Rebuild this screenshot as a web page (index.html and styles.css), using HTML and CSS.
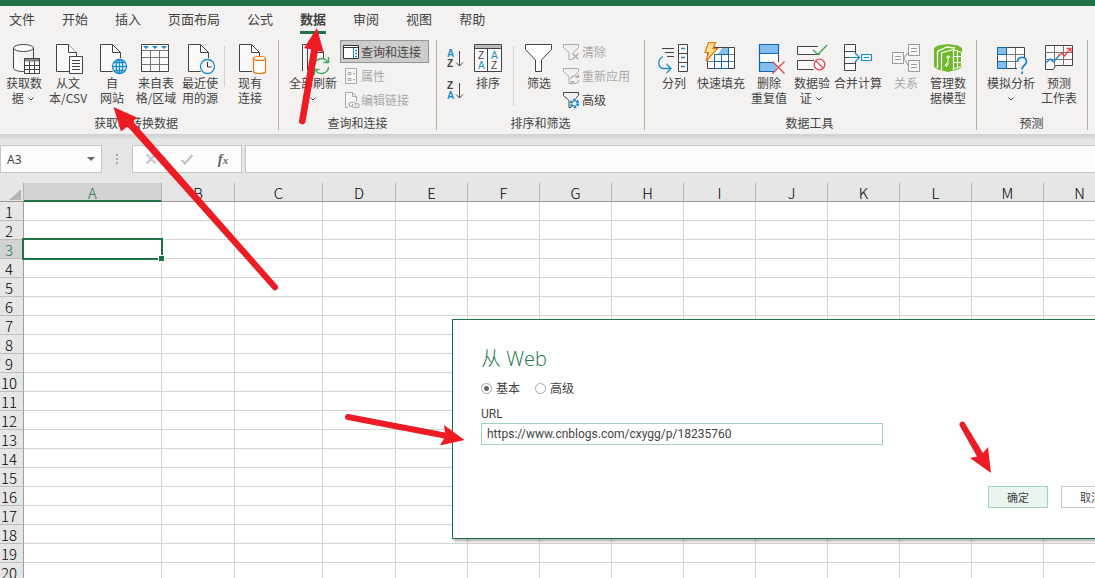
FILE: index.html
```html
<!DOCTYPE html>
<html lang="zh-CN">
<head>
<meta charset="utf-8">
<title>Excel - 数据</title>
<link rel="stylesheet" href="styles.css">
</head>
<body>
<div class="app">
  <div class="titlebar"></div>
  <nav class="tabs">
    <button class="tab">文件</button>
    <button class="tab">开始</button>
    <button class="tab">插入</button>
    <button class="tab">页面布局</button>
    <button class="tab">公式</button>
    <button class="tab active">数据</button>
    <button class="tab">审阅</button>
    <button class="tab">视图</button>
    <button class="tab">帮助</button>
  </nav>

  <div class="ribbon">
    <section class="group first">
      <div class="tools">
        <button class="tool">
          <svg class="icon" viewBox="2 41 44 34"><g fill="#fafafa" stroke="#444"><path d="M13.5 48v20c0 2 4 3.500 10 3.500h1M33.500 48v10"/><ellipse cx="23.500" cy="48" rx="10" ry="3.500"/><path d="M24.500 58.500h15v15h-15z"/><path d="M24.500 60h15" stroke-width="3" stroke="#888"/><path d="M24.500 58.500h15v15h-15zM24.500 65.500h15M24.500 69.500h15M29.500 61v12M34.500 61v12" fill="none"/></g></svg>
          <span>获取数<br>据 <svg class="chev" viewBox="0 0 6 4"><path d="M.5.5L3 3 5.500.5"/></svg></span>
        </button>
        <button class="tool">
          <svg class="icon" viewBox="46 41 44 34"><g fill="#fafafa" stroke="#444"><path d="M56.500 44.500h12l8 8v19h-20z"/><path d="M68.500 44.500v8h8"/><path d="M69.500 56.500h13v17h-13z"/><path d="M72 60.500h8M72 63.500h8M72 66.500h8M72 69.500h8"/></g></svg>
          <span>从文<br>本/CSV</span>
        </button>
        <button class="tool">
          <svg class="icon" viewBox="90 41 44 34"><path d="M100.500 44.500h12l8 8v19h-20z" fill="#fafafa" stroke="#444"/><path d="M112.500 44.500v8h8" fill="none" stroke="#444"/><circle cx="119.500" cy="66.500" r="8.500" fill="#f3f2f1"/><g fill="#fafafa" stroke="#1e8bcd" stroke-width="1.300"><circle cx="119.500" cy="66.500" r="7"/><ellipse cx="119.500" cy="66.500" rx="3.300" ry="7"/><path d="M112.500 66.500h14M114 62.500h11M114 70.500h11M119.500 59.500v14" fill="none"/></g></svg>
          <span>自<br>网站</span>
        </button>
        <button class="tool">
          <svg class="icon" viewBox="134 41 44 34"><path d="M141.500 44.500h27v27h-27z" fill="#fafafa" stroke="#444"/><path d="M142 50.500h26M142 57.500h26M142 64.500h26M150.500 50v21M159.500 50v21" stroke="#777" fill="none"/><path d="M143 46h6l-3 3zM152 46h6l-3 3zM161 46h6l-3 3z" fill="#1e8bcd"/></svg>
          <span>来自表<br>格/区域</span>
        </button>
        <button class="tool">
          <svg class="icon" viewBox="178 41 44 34"><path d="M188.500 44.500h12l8 8v19h-20z" fill="#fafafa" stroke="#444"/><path d="M200.500 44.500v8h8" fill="none" stroke="#444"/><circle cx="207.500" cy="66.500" r="8.500" fill="#f3f2f1"/><circle cx="207.500" cy="66.500" r="7" fill="#fafafa" stroke="#1e8bcd" stroke-width="1.300"/><path d="M207.500 62v5h4" fill="none" stroke="#333"/></svg>
          <span>最近使<br>用的源</span>
        </button>
        <i class="divider short"></i>
        <button class="tool">
          <svg class="icon" viewBox="228 41 44 34"><path d="M239.500 44.500h12l8 8v19h-20z" fill="#fafafa" stroke="#444"/><path d="M251.500 44.500v8h8" fill="none" stroke="#444"/><path d="M252 56h15v18h-15z" fill="#f3f2f1"/><g fill="#fff" stroke="#e8750d" stroke-width="1.200"><path d="M253.500 58.500v13c0 1 3 2 6 2s6-1 6-2v-13"/><ellipse cx="259.500" cy="58.500" rx="6" ry="2"/></g></svg>
          <span>现有<br>连接</span>
        </button>
      </div>
      <h2 class="caption">获取和转换数据</h2>
    </section>

    <section class="group queries">
      <div class="tools">
        <button class="tool wide">
          <svg class="icon" viewBox="288 41 50 34"><g fill="#fafafa" stroke="#444"><path d="M302.500 71V44.500h4"/><path d="M307.500 44.500h9l7 7v19h-16z"/><path d="M316.500 44.500v8h7" fill="none"/></g><path d="M312 58h18v16h-18z" fill="#f3f2f1"/><g fill="none" stroke="#3fa95a" stroke-width="1.400"><path d="M314.500 65a7 7 0 0 1 13-3M328.500 57v5.500h-5M328.500 67a7 7 0 0 1-13 3M314.500 75v-5.500h5"/></g></svg>
          <span>全部刷新<br><svg class="chev" viewBox="0 0 6 4"><path d="M.5.5L3 3 5.500.5"/></svg></span>
        </button>
        <div class="stack">
          <button class="small selected"><svg viewBox="342 42 18 18"><path d="M343.500 44.500h15v13h-15z" fill="#fff" stroke="#333"/><path d="M343.500 46.500h15" stroke="#333"/><path d="M353.500 47v10" stroke="#1e8bcd"/><path d="M355 49.500h2M355 52.500h2M355 55.500h2" stroke="#1e8bcd" stroke-width="1.500"/></svg>查询和连接</button>
          <button class="small" disabled><svg viewBox="342 66 18 18"><path d="M345.500 67.500h11v15h-11z" fill="#f7f7f7" stroke="#aaa"/><path d="M348 71.500h3v2h-3zM348 77.500h3v2h-3z" fill="none" stroke="#aaa"/><path d="M353 72.500h2M353 78.500h2" stroke="#aaa"/></svg>属性</button>
          <button class="small" disabled><svg viewBox="342 90 18 18"><path d="M348 106.500h-2.500v-15h7l4 4v5M352.500 91.500v4h4" fill="#f7f7f7" stroke="#aaa"/><g fill="none" stroke="#aaa" stroke-width="1.200"><path d="M353 105.500h-2a2 2 0 0 1 0-4h3a2 2 0 0 1 1 3.500"/><path d="M355 102.500h2a2 2 0 0 1 0 4h-3a2 2 0 0 1-1-3.500"/></g></svg>编辑链接</button>
        </div>
      </div>
      <h2 class="caption">查询和连接</h2>
    </section>

    <section class="group sorting">
      <div class="tools">
        <div class="sorts">
          <button class="sort" aria-label="升序"><svg viewBox="447 49 18 20"><text class="blue" x="448" y="57">A</text><text x="448" y="67">Z</text><path d="M460.500 51v15M457 62.500l3.500 3.500 3.500-3.500"/></svg></button>
          <button class="sort" aria-label="降序"><svg viewBox="447 81 18 20"><text x="448" y="89">Z</text><text class="blue" x="448" y="99">A</text><path d="M460.500 83v15M457 94.500l3.500 3.500 3.500-3.500"/></svg></button>
        </div>
        <button class="tool">
          <svg class="icon letters" viewBox="466 41 44 34"><path d="M474.500 44.500h27v27h-27z" fill="#fafafa" stroke="#444"/><path d="M475 45h26v3h-26z" fill="#bbb"/><path d="M474.500 48.500h27M487.500 49v22" stroke="#444"/><text x="478" y="59">Z</text><text class="blue" x="478" y="69">A</text><text class="blue" x="491" y="59">A</text><text x="491" y="69">Z</text></svg>
          <span>排序</span>
        </button>
        <i class="divider"></i>
        <button class="tool">
          <svg class="icon" viewBox="517 41 44 34"><path d="M525.500 44.500h26v5l-10 10.500v11.500h-6V60l-10-10.500z" fill="#fff" stroke="#444"/></svg>
          <span>筛选</span>
        </button>
        <div class="stack">
          <button class="small" disabled><svg viewBox="562 42 18 18"><path d="M563.500 43.500h15v3l-5 5v3M563.500 43.500v3l5.500 5v7h3" fill="none" stroke="#aaa"/><path d="M572.500 52.500l6 6M578.500 52.500l-6 6" stroke="#aaa" stroke-width="1.200"/></svg>清除</button>
          <button class="small" disabled><svg viewBox="562 66 18 18"><path d="M563.500 67.500h15v3l-3 3M563.500 67.500v3l5.500 5v7h2" fill="none" stroke="#aaa"/><path d="M571 78a4 4 0 0 1 7-2M578.500 73.500v3h-3M579 79a4 4 0 0 1-7 2M571.500 83.500v-3h3" fill="none" stroke="#aaa" stroke-width="1.200"/></svg>重新应用</button>
          <button class="small"><svg viewBox="562 90 18 18"><path d="M563.500 91.500h15v3l-3 3M563.500 91.500v3l5.500 5v7h2" fill="none" stroke="#444"/><circle cx="574.500" cy="102.500" r="3.700" fill="#f3f2f1" stroke="#1e8bcd" stroke-width="2.200" stroke-dasharray="2.500 1.380"/><circle cx="574.500" cy="102.500" r="2.600" fill="#f3f2f1" stroke="#1e8bcd"/></svg>高级</button>
        </div>
      </div>
      <h2 class="caption">排序和筛选</h2>
    </section>

    <section class="group data">
      <div class="tools">
        <button class="tool">
          <svg class="icon" viewBox="652 41 44 34"><path d="M662 48.500h12M665 52.500h9M667 56.500h7" stroke="#444" stroke-width="1.200"/><path d="M678.500 44.500h9v27h-9zM678.500 53.500h9M678.500 62.500h9" fill="#fafafa" stroke="#444"/><path d="M681 48.500h4M681 57.500h4M681 66.500h4" stroke="#1e8bcd" stroke-width="1.300"/><path d="M663 56.500c-6 3-5.500 12 1 12h6.500M666.500 64l4.500 4.500-4.500 4.500" fill="none" stroke="#1e8bcd" stroke-width="1.300"/></svg>
          <span>分列</span>
        </button>
        <button class="tool wide">
          <svg class="icon" viewBox="696 41 50 34"><path d="M707.500 47.500h27v21h-27z" fill="#fff" stroke="#444"/><path d="M718 54l4-6h6v6z" fill="#83beec"/><path d="M728 54.500h6M728 61.500h6M707 61.500h7" stroke="#777"/><path d="M714 54.500h14.500M714 61.500h14.500M714 68.500h14.500M714.500 54v14M721.500 54v14M728.500 48v20" stroke="#1267b4" fill="none"/><path d="M708.500 42.500h7l-2.500 6h4.500L706 61l2.500-8.500H705z" fill="#ffe091" stroke="#e8750d" stroke-width="1.200"/></svg>
          <span>快速填充</span>
        </button>
        <button class="tool mid">
          <svg class="icon" viewBox="746 41 46 34"><path d="M759.500 44.500h19v27h-19z" fill="#fff"/><path d="M778.500 53v9" stroke="#444"/><path d="M759.500 44.500h19v9h-19zM759.500 62.500h14l4 4-3 5h-15z" fill="#83beec" stroke="none"/><path d="M778.500 53.500v-9h-19v27h15M759 53.500h20M759 62.500h14" fill="none" stroke="#1267b4" stroke-width="1.200"/><path d="M772.500 61.500l12 12M784.500 61.500l-12 12" stroke="#e8434a" stroke-width="1.300"/></svg>
          <span>删除<br>重复值</span>
        </button>
        <button class="tool slim">
          <svg class="icon" viewBox="792 41 40 34"><path d="M818 46.500h-20.500v8h22v-1M814 60.500h-16.500v9h16" fill="#fafafa" stroke="#444"/><path d="M813 50l5 4.500 9-9.500" fill="none" stroke="#3fa95a" stroke-width="1.400"/><circle cx="819.500" cy="64.500" r="5.300" fill="#fff" stroke="#e8434a" stroke-width="1.300"/><path d="M816 61l7 7" stroke="#e8434a" stroke-width="1.300"/></svg>
          <span>数据验<br>证 <svg class="chev" viewBox="0 0 6 4"><path d="M.5.5L3 3 5.500.5"/></svg></span>
        </button>
        <button class="tool broad">
          <svg class="icon" viewBox="832 41 52 34"><path d="M855.500 53v-8.500h-11v26h11V62" fill="#fafafa" stroke="#444"/><path d="M845 51.500h10M845 57.500h4M845 63.500h10" stroke="#444"/><path d="M849 57.500h10M855 53l4.500 4.500L855 62M861.500 54.500h10v6h-10zM864 57.500h5" fill="none" stroke="#1e8bcd" stroke-width="1.200"/></svg>
          <span>合并计算</span>
        </button>
        <button class="tool" disabled>
          <svg class="icon" viewBox="884 41 44 34"><g fill="#f7f7f7" stroke="#999"><path d="M892.500 52.500h11v11h-11zM908.500 44.500h11v11h-11zM908.500 60.500h11v11h-11zM895 56.500h6M895 59.500h6M911 48.500h6M911 51.500h6M911 64.500h6M911 67.500h6"/><path d="M904 58l4-5.500M904 58l4 7.500" fill="none"/></g></svg>
          <span>关系</span>
        </button>
        <button class="tool slim">
          <svg class="icon" viewBox="928 41 40 34"><path d="M934 48l4-2.500 10-1.500 10 1.500 4 2.500v19l-4 2.500-10 2.500-10-2.500-4-2.500z" fill="#70b82c"/><path d="M937.500 68V51.500l9.500-4.500 8 1" fill="none" stroke="#fff" stroke-width="1.300"/><path d="M941.500 70V53l12-3.500v21" fill="none" stroke="#fff" stroke-width="1.200"/><path d="M953.500 49.500l8 3M954 56.500h8M954 62.500h8M954 68.500l7-2M957.500 51v18M961.500 52.500v14" fill="none" stroke="#fff"/><path d="M949.500 57h-1.500v8h-2.500M946.500 58l1.500-2.500 2 2M947 63l-2 2 2 2" fill="none" stroke="#fff"/></svg>
          <span>管理数<br>据模型</span>
        </button>
      </div>
      <h2 class="caption">数据工具</h2>
    </section>

    <section class="group forecast">
      <div class="tools">
        <button class="tool broad">
          <svg class="icon" viewBox="985 41 52 34"><path d="M997.500 47.500h27v21h-27z" fill="#fafafa" stroke="#444"/><path d="M997 54.500h27M997 61.500h27M1006.500 48v20M1015.500 48v20" stroke="#777"/><path d="M997.500 47.500h9v7h-9zM997.500 61.500h9v7h-9z" fill="#83beec" stroke="#1267b4"/><path d="M1017 57h11v17h-11z" fill="#f3f2f1"/><path d="M1017.500 62c0-6 9-6 9-.5 0 4-4.500 3.500-4.500 8M1022 71.500v2.500" fill="none" stroke="#1e8bcd" stroke-width="1.800"/></svg>
          <span>模拟分析<br><svg class="chev" viewBox="0 0 6 4"><path d="M.5.5L3 3 5.500.5"/></svg></span>
        </button>
        <button class="tool">
          <svg class="icon" viewBox="1037 41 44 34"><path d="M1045.500 45.500h27v20h-17l-2 4h-8z" fill="#fafafa" stroke="#444"/><path d="M1045 52.500h27M1045 59.500h27M1054.500 46v20M1063.500 46v20" stroke="#777"/><path d="M1045.500 63l5-4 3 3 6-7" fill="none" stroke="#1e8bcd" stroke-width="1.500"/><path d="M1058.500 56l3-3 3 3 6-7.500M1066.500 48.500h4.500v4.500" fill="none" stroke="#e8434a" stroke-width="1.300"/></svg>
          <span>预测<br>工作表</span>
        </button>
      </div>
      <h2 class="caption">预测</h2>
    </section>
  </div>

  <div class="formula-bar">
    <div class="namebox">
      <input class="name-input" aria-label="名称框" value="A3">
      <button class="name-drop" aria-label="展开名称框"><svg viewBox="0 0 8 4"><path d="M0 0h8L4 4z"/></svg></button>
    </div>
    <svg class="grip" viewBox="0 0 2 10"><path d="M0 0h2v2H0zM0 4h2v2H0zM0 8h2v2H0z"/></svg>
    <div class="fx-buttons">
      <button aria-label="取消"><svg viewBox="0 0 12 12"><path d="M1.500 1.500l9 9M10.500 1.500l-9 9" stroke="#c4c4c4" stroke-width="1.800"/></svg></button>
      <button aria-label="输入"><svg viewBox="0 0 12 12"><path d="M.5 7l3.500 3.500L11.500 2" fill="none" stroke="#c4c4c4" stroke-width="2.200"/></svg></button>
      <button class="fx" aria-label="插入函数">f<small>x</small></button>
    </div>
    <input class="formula" aria-label="编辑栏">
  </div>

  <table class="sheet">
    <colgroup>
      <col class="c-head"><col class="c-a"><col class="c-b"><col class="c-c"><col class="c-b">
      <col><col><col><col><col><col><col><col><col><col>
    </colgroup>
    <thead>
      <tr><th class="corner"><svg viewBox="0 0 12 11"><path d="M12 0v11H0z"/></svg></th><th class="current">A</th><th>B</th><th>C</th><th>D</th><th>E</th><th>F</th><th>G</th><th>H</th><th>I</th><th>J</th><th>K</th><th>L</th><th>M</th><th>N</th></tr>
    </thead>
    <tbody id="rows"></tbody>
  </table>

  <form class="dialog" role="dialog" aria-labelledby="dialog-title">
    <h1 class="dialog-title" id="dialog-title">从 Web</h1>
    <div class="modes">
      <label class="mode"><input type="radio" name="mode" checked>基本</label>
      <label class="mode"><input type="radio" name="mode">高级</label>
    </div>
    <label class="url-label" for="url">URL</label>
    <input class="url" id="url" type="text" value="https://www.cnblogs.com/cxygg/p/18235760">
    <div class="actions">
      <button type="button" class="btn primary">确定</button>
      <button type="button" class="btn">取消</button>
    </div>
  </form>

  <svg class="arrows" width="1095" height="578" viewBox="0 0 1095 578" aria-hidden="true">
    <path d="M113.500 107L137 117.500 133 121.500 277.300 285.200A3 3 0 0 1 272.700 289.200L127.500 126.500 121 131.500z"/>
    <path d="M317 28L323.500 52 318 51 305.500 121.500A3.200 3.200 0 0 1 299 120.500L311 49.500 304 48z"/>
    <path d="M464.500 440L444 425 445 432.500 348.500 414A3 3 0 0 0 347.500 420L444 438.500 440 445.500z"/>
    <path d="M991 473L988 447 983 453 964.500 422.500A3 3 0 0 0 959.500 425.500L977 456.500 970 458z"/>
  </svg>
</div>
<script src="sheet.js"></script>
</body>
</html>
```

FILE: styles.css
```css
* { box-sizing: border-box; }

body {
  margin: 0;
  color: #444;
  font-family: "Noto Sans CJK SC", "Noto Sans", sans-serif;
  font-size: 12px;
}

button, input {
  margin: 0;
  padding: 0;
  border: 0;
  background: none;
  color: inherit;
  font: inherit;
}

.app {
  position: relative;
  height: 100vh;
  overflow: hidden;
  background: #e6e6e6;
}

.titlebar { height: 6px; background: #217346; }

.tabs {
  display: flex;
  gap: 27px;
  height: 34px;
  padding-left: 9px;
  background: #f3f2f1;
}
.tab {
  height: 28px;
  border-bottom: 3px solid transparent;
  font-size: 13px;
  line-height: 26px;
  white-space: nowrap;
}
.tab.active { border-color: #217346; font-weight: 700; }

.ribbon {
  display: flex;
  height: 94px;
  background: #f3f2f1;
}
.group {
  display: flex;
  flex: none;
  flex-direction: column;
  height: 90px;
  border-right: 1px solid #b3b0ad;
}
.group.first { padding-left: 2px; width: 279px; }
.first .caption { padding-right: 8px; }
.queries { width: 158px; padding-left: 9px; }
.sorting { width: 208px; padding-left: 9px; }
.data { width: 332px; padding-left: 7px; }
.forecast { width: 111px; padding-left: 8px; }
.tools { display: flex; flex: none; height: 76px; }
.caption {
  margin: 0;
  font-size: 12px;
  font-weight: 400;
  line-height: 14px;
  text-align: center;
}
.queries .caption, .sorting .caption, .data .caption, .forecast .caption { margin-left: -9px; }

.tool {
  display: flex;
  flex: none;
  flex-direction: column;
  align-items: center;
  width: 44px;
  padding-top: 1px;
  line-height: 15px;
  white-space: nowrap;
}
.tool.wide { width: 50px; }
.tool.mid { width: 46px; }
.tool.slim { width: 40px; }
.tool.broad { width: 52px; }
.icon { flex: none; width: 100%; height: 34px; }
.chev { width: 6px; height: 4px; margin: 0 2px; vertical-align: 2px; fill: none; stroke: #444; }
.tool:disabled, .small:disabled { color: #a8a8a8; }

.divider { flex: none; width: 1px; height: 60px; margin: 6px 3px 0; background: #d2d0ce; }
.divider.short { height: 41px; margin: 6px 3px 0 2px; }

.stack { display: flex; flex-direction: column; gap: 1px; padding-left: 2px; }
.sorting .stack { padding-left: 0; }
.small {
  display: flex;
  align-items: center;
  gap: 1px;
  height: 23px;
  padding: 0 7px 0 1px;
  border: 1px solid transparent;
  white-space: nowrap;
}
.small svg { width: 18px; height: 18px; }
.sorting .small { padding-left: 0; gap: 2px; }
.small.selected { border-color: #979593; background: #cfcdcb; }

.sorts { display: flex; flex-direction: column; gap: 12px; width: 20px; padding-top: 9px; }
.sort { width: 18px; height: 20px; }
.sort svg { display: block; fill: none; stroke: #444; }
.sort text, .letters text {
  fill: #444;
  stroke: none;
  font-family: "Liberation Sans", sans-serif;
  font-size: 10px;
}
.sort text { font-weight: 700; }
.sort .blue, .letters .blue { fill: #1e8bcd; }

.formula-bar {
  display: flex;
  height: 49px;
  padding: 11px 0 10px;
  background: linear-gradient(#cfcfcf, #e6e6e6 6px);
}
.namebox, .fx-buttons, .formula {
  height: 28px;
  border: 1px solid #c6c6c6;
  background: #fdfdfd;
}
.namebox { display: flex; width: 102px; }
.name-input { flex: 1; min-width: 0; padding-left: 6px; font-family: "Noto Sans", sans-serif; font-size: 12px; }
.name-drop { width: 18px; }
.name-drop svg { display: block; width: 8px; height: 4px; margin-left: 4px; fill: #666; }
.grip { width: 2px; height: 10px; margin: 9px 14px 0; fill: #a6a6a6; }
.fx-buttons { display: flex; width: 110px; }
.fx-buttons button { flex: 1; }
.fx-buttons svg { width: 12px; height: 12px; }
.fx { color: #666; font-family: "Liberation Serif", serif; font-size: 15px; font-style: italic; font-weight: 700; }
.fx small { font-size: 11px; }
.formula { flex: 1; min-width: 0; margin-left: 3px; border-right: 0; padding: 0 6px; }

.sheet {
  width: 1116px;
  border-spacing: 0;
  table-layout: fixed;
  background: #fff;
}
.c-head { width: 24px; }
.c-a { width: 138px; }
.c-b { width: 73px; }
.c-c { width: 88px; }
.sheet th, .sheet td { padding: 0; border-right: 1px solid #d4d4d4; border-bottom: 1px solid #d4d4d4; }
.sheet td { position: relative; height: 19px; }
.sheet th {
  background: #e6e6e6;
  color: #000;
  font-size: 15px;
  font-weight: 300;
}
.sheet thead th {
  height: 19px;
  padding-top: 2px;
  border-right-color: #b4b4b4;
  border-bottom-color: #999;
  line-height: 16px;
}
.sheet tbody th {
  padding: 2px 5px 0 0;
  border-right-color: #9f9f9f;
  border-bottom-color: #bdbdbd;
  line-height: 16px;
}
.sheet .corner svg { display: block; width: 12px; height: 11px; margin: 2px 0 0 9px; fill: #b4b4b4; }
.sheet .current { background: #d2d2d2; color: #217346; }
.sheet thead .current { border-bottom: 2px solid #217346; line-height: 15px; }
.selection { position: absolute; z-index: 1; inset: -2px; border: 2px solid #217346; }
.handle { position: absolute; right: -4px; bottom: -4px; width: 7px; height: 7px; border: 1px solid #fff; background: #217346; }

.dialog {
  position: absolute;
  z-index: 2;
  top: 319px;
  left: 452px;
  width: 698px;
  padding: 26px 28px 30px;
  border: 1px solid #217346;
  background: #fff;
  box-shadow: 2px 2px 3px rgba(0, 0, 0, .35);
}
.dialog-title {
  margin: 0;
  color: #217346;
  font-family: "Open Sans", "Noto Sans CJK SC", sans-serif;
  font-size: 20px;
  font-weight: 300;
  line-height: 26px;
}
.modes { display: flex; gap: 15px; margin-top: 6px; }
.mode { display: flex; align-items: center; gap: 4px; line-height: 20px; }
.mode input {
  appearance: none;
  width: 11px;
  height: 11px;
  border: 1px solid #a6a6a6;
  border-radius: 50%;
}
.mode input:checked { background: radial-gradient(circle, #666 0 2px, #fff 3px); }
.url-label { display: block; margin-top: 7px; font-family: Roboto, sans-serif; line-height: 18px; }
.url {
  display: block;
  width: 402px;
  height: 22px;
  padding-left: 5px;
  border: 1px solid #9fd5b7;
  font-family: Roboto, sans-serif;
}
.actions { display: flex; justify-content: flex-end; gap: 13px; margin-top: 41px; }
.btn { width: 60px; height: 22px; border: 1px solid #c6c6c6; font-size: 11px; }
.btn.primary { border-color: #9fd5b7; background: #e9f5ee; }

.arrows { position: absolute; z-index: 3; top: 0; left: 0; fill: #ed1c24; pointer-events: none; }
```

FILE: sheet.js
```js
const body = document.getElementById('rows');
for (let r = 1; r <= 20; r++) {
  const row = body.insertRow();
  const head = document.createElement('th');
  head.textContent = r;
  row.append(head);
  for (let c = 0; c < 14; c++) row.insertCell();
  if (r === 3) {
    head.className = 'current';
    row.cells[1].innerHTML = '<span class="selection"><span class="handle"></span></span>';
  }
}
```
